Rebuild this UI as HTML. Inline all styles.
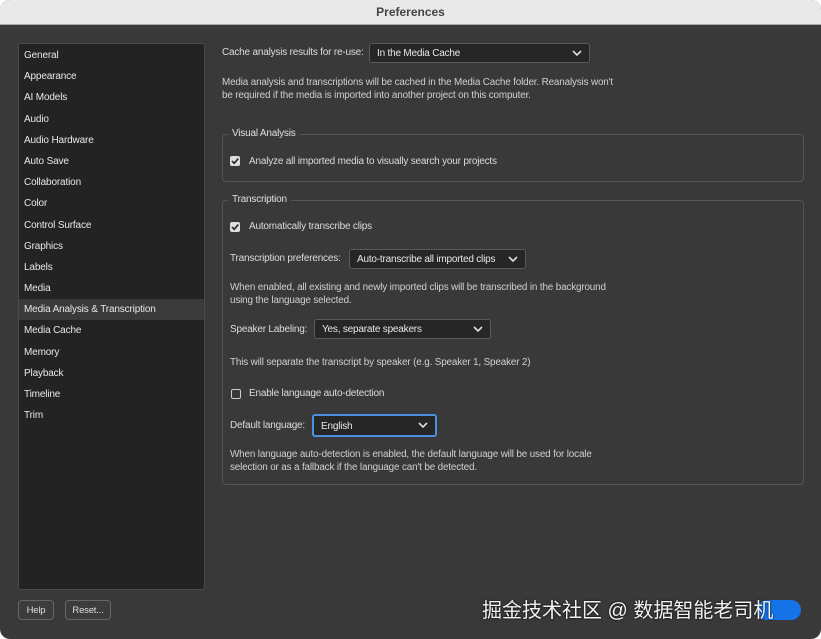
<!DOCTYPE html><html><head><style>
body{margin:0;width:821px;height:639px;background:#fff;font-family:"Liberation Sans",sans-serif;overflow:hidden;position:relative}
.win{position:absolute;left:0;top:0;width:821px;height:639px;background:#393939;border-radius:10px;overflow:hidden}
.title{height:24px;background:#e9e9e9;border-bottom:1px solid #aaa;text-align:center;font-size:12px;font-weight:bold;color:#444;line-height:24px}
.side{position:absolute;left:18px;top:43px;width:185px;height:545px;background:#232323;border:1px solid #4a4a4a;border-radius:3px}
.side div{height:21.2px;line-height:21.2px;padding-left:5px;font-size:10px;letter-spacing:-0.15px;color:#e8e8e8}
.side .sel{background:#3a3a3a}
.t{position:absolute;font-size:10px;letter-spacing:-0.2px;color:#dcdcdc;white-space:nowrap}
.p{position:absolute;font-size:9.9px;letter-spacing:-0.15px;color:#d0d0d0;line-height:13px;white-space:nowrap}
.sel2{position:absolute;height:20px;border:1px solid #5a5a5a;border-radius:3px;background:#262626;font-size:10px;letter-spacing:-0.2px;color:#e8e8e8;line-height:19px;padding-left:7px;box-sizing:border-box;white-space:nowrap}
.sel2 svg{position:absolute;right:7px;top:6px}
.grp{position:absolute;border:1px solid #555;border-radius:4px}
.lg{position:absolute;background:#393939;padding:0 4px;font-size:10px;letter-spacing:-0.2px;color:#e0e0e0}
.cb{position:absolute;width:10px;height:10px;border-radius:2px}
.btn{position:absolute;height:20px;border:1px solid #666;border-radius:4px;font-size:9.5px;letter-spacing:-0.2px;color:#ddd;line-height:19px;text-align:center;background:#3c3c3c;box-sizing:border-box}
</style></head><body><div class="win">
<div class="title">Preferences</div>
<div class="side">
<div style="margin-top:1px">General</div><div>Appearance</div><div>AI Models</div><div>Audio</div><div>Audio Hardware</div><div>Auto Save</div><div>Collaboration</div><div>Color</div><div>Control Surface</div><div>Graphics</div><div>Labels</div><div>Media</div><div class="sel">Media Analysis &amp; Transcription</div><div>Media Cache</div><div>Memory</div><div>Playback</div><div>Timeline</div><div>Trim</div>
</div>
<div class="t" style="left:222px;top:47px">Cache analysis results for re-use:</div>
<div class="sel2" style="left:369px;top:43px;width:221px">In the Media Cache<svg width="10" height="7"><path d="M1 1L5 5L9 1" stroke="#ddd" stroke-width="1.6" fill="none"/></svg></div>
<div class="p" style="left:222px;top:76px">Media analysis and transcriptions will be cached in the Media Cache folder. Reanalysis won't<br>be required if the media is imported into another project on this computer.</div>
<div class="grp" style="left:222px;top:134px;width:580px;height:46px"></div>
<div class="lg" style="left:228px;top:128px">Visual Analysis</div>
<div class="cb" style="left:230px;top:156px;background:#ddd"><svg width="10" height="10" style="position:absolute;left:0;top:0"><path d="M2 5L4.2 7.3L8.3 2.5" stroke="#222" stroke-width="1.6" fill="none"/></svg></div>
<div class="t" style="left:249px;top:156px">Analyze all imported media to visually search your projects</div>
<div class="grp" style="left:222px;top:200px;width:580px;height:283px"></div>
<div class="lg" style="left:228px;top:194px">Transcription</div>
<div class="cb" style="left:230px;top:222px;background:#ddd"><svg width="10" height="10" style="position:absolute;left:0;top:0"><path d="M2 5L4.2 7.3L8.3 2.5" stroke="#222" stroke-width="1.6" fill="none"/></svg></div>
<div class="t" style="left:249px;top:221px">Automatically transcribe clips</div>
<div class="t" style="left:230px;top:253px">Transcription preferences:</div>
<div class="sel2" style="left:349px;top:249px;width:177px">Auto-transcribe all imported clips<svg width="10" height="7"><path d="M1 1L5 5L9 1" stroke="#ddd" stroke-width="1.6" fill="none"/></svg></div>
<div class="p" style="left:230px;top:281px">When enabled, all existing and newly imported clips will be transcribed in the background<br>using the language selected.</div>
<div class="t" style="left:230px;top:324px">Speaker Labeling:</div>
<div class="sel2" style="left:314px;top:319px;width:177px">Yes, separate speakers<svg width="10" height="7"><path d="M1 1L5 5L9 1" stroke="#ddd" stroke-width="1.6" fill="none"/></svg></div>
<div class="p" style="left:230px;top:356px">This will separate the transcript by speaker (e.g. Speaker 1, Speaker 2)</div>
<div class="cb" style="left:231px;top:389px;border:1px solid #ccc;width:8px;height:8px"></div>
<div class="t" style="left:249px;top:388px">Enable language auto-detection</div>
<div class="t" style="left:230px;top:420px">Default language:</div>
<div class="sel2" style="left:312px;top:414px;width:125px;height:23px;border:2px solid #4a8fe0;line-height:21px">English<svg width="10" height="7"><path d="M1 1L5 5L9 1" stroke="#ddd" stroke-width="1.6" fill="none"/></svg></div>
<div class="p" style="left:230px;top:448px">When language auto-detection is enabled, the default language will be used for locale<br>selection or as a fallback if the language can't be detected.</div>
<div class="btn" style="left:18px;top:600px;width:36px">Help</div>
<div class="btn" style="left:65px;top:600px;width:46px">Reset...</div>
<div style="position:absolute;left:757px;top:600px;width:44px;height:20px;border-radius:10px;background:#1473e6"></div>
<div style="position:absolute;left:482px;top:594px;font-family:'Liberation Sans','Noto Sans CJK SC',sans-serif;font-size:20px;color:#f2f2f2;text-shadow:0 0 2px #000;white-space:nowrap">掘金技术社区 @ 数据智能老司机</div>
</div></body></html>
